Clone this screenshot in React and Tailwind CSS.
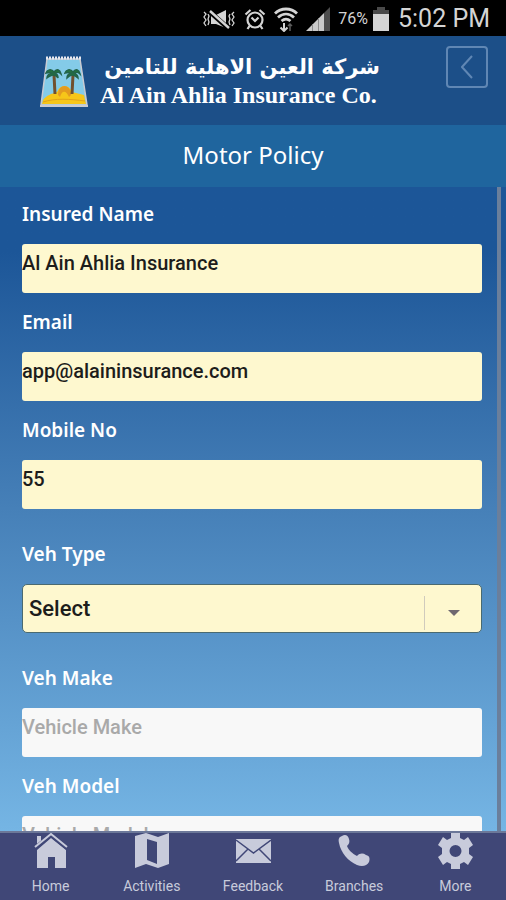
import React from 'react';

const MuteIcon = () => (
  <svg viewBox="0 0 34 22" className="h-[22px] w-[34px]" fill="none" stroke="#d4d4d4" strokeWidth="1.6">
    <path d="M2 4l2 2-2 3 2 3-2 3 2 3M6 6l1 2-1 3 1 3-1 3M32 4l-2 2 2 3-2 3 2 3-2 3M28 6l-1 2 1 3-1 3 1 3" strokeWidth="1.3" />
    <path d="M9 7h5l10-5v18l-10-4H9z" fill="#d4d4d4" stroke="none" />
    <path d="M7 3l19 17" stroke="#000" strokeWidth="5" />
    <path d="M8 3l19 17" strokeWidth="2.4" />
  </svg>
);

const AlarmIcon = () => (
  <svg viewBox="0 0 22 22" className="h-[22px] w-[22px]" fill="none" stroke="#d4d4d4" strokeWidth="2.2">
    <circle cx="11" cy="12" r="7.5" />
    <path d="M1.500 6.500l5-4.500M20.500 6.500l-5-4.500M5.500 18l-2 3M16.500 18l2 3M7.500 9.500l3.500 3.500 3.500-3.500" />
  </svg>
);

const WifiIcon = () => (
  <svg viewBox="0 0 24 25" className="h-[25px] w-6" fill="none" stroke="#d4d4d4" strokeWidth="2.8">
    <path d="M1 6.500c6-6 16-6 22 0M4 10.500c5-4.500 11-4.500 16 0M7.500 14c3-2.500 6-2.500 9 0" />
    <path d="M10 16v8M6.500 20.500l3.500 3.500 3.500-3.500" strokeWidth="2" />
    <path d="M16 24v-7M14 19l2-2 2 2" stroke="#5c5c5c" strokeWidth="1.5" />
  </svg>
);

const SignalIcon = () => (
  <svg viewBox="0 0 24 24" className="h-6 w-6">
    <path d="M0 24L18 6v18z" fill="#c9c9c9" />
    <path d="M18 6l6-6v24h-6z" fill="#4d4d4d" />
    <path d="M6.500 17v7M12.500 11v13" stroke="#8c8c8c" />
  </svg>
);

const BatteryIcon = () => (
  <svg viewBox="0 0 18 24" className="h-6 w-[18px]">
    <path d="M5 0h8v3h4v5H1V3h4z" fill="#4a4a4a" />
    <path d="M1 7h16v17H1z" fill="#d4d4d4" />
  </svg>
);

const PalmLogo = () => (
  <svg viewBox="0 0 50 52" className="h-[52px] w-[50px] shrink-0">
    <path d="M8 4h33l7 46H2z" fill="#84cbe8" stroke="#c9cbd2" strokeWidth="1.500" />
    <path d="M7 3h35" stroke="#e9e9ef" strokeWidth="3" strokeDasharray="2 1" />
    <path d="M4 45c4-5 8-6 14-8 3-8 12-8 15 0l12 3 2 9H3z" fill="#f6c619" />
    <path d="M19 40c0-12 13-12 13 0l-2 2c-3-7-7-7-9 0z" fill="#e39b20" />
    <path d="M4 47c12-4 27-3 42-1" stroke="#e0a21c" fill="none" />
    <path d="M15 20l1 19M34 20l-1 19" stroke="#71502e" strokeWidth="3" />
    <path d="M15 17c-3-4-7-2-8 1 3-1 4-1 6 0-3 1-5 3-5 5 3-2 4-3 6-3 3 0 4 1 5 3 0-2-1-4-3-5 3-1 4-1 6 1-1-4-4-6-7-2zM34 17c-3-4-7-2-8 1 3-1 4-1 6 0-3 1-4 3-4 5 2-2 3-3 5-3 3 0 4 1 6 3 0-2-2-4-4-5 3-1 4-1 6 1-1-4-4-6-7-2z" fill="#23763e" stroke="#23634a" strokeWidth="1.500" />
    <path d="M1 51h48" stroke="#c9cbd2" strokeWidth="2" />
  </svg>
);

const navItems = [
  {
    label: 'Home',
    icon: (
      <>
        <path d="M4 3h4v6l-4 4z" />
        <path d="M18 5l15 12v18H22V24h-7v11H4V17z" />
        <path d="M2 15L18 2l16 13" fill="none" stroke="#404777" strokeWidth="4" />
        <path d="M2 14L18 1l16 13" fill="none" stroke="#c8cbdb" strokeWidth="2" />
      </>
    ),
  },
  {
    label: 'Activities',
    icon: <path fillRule="evenodd" d="M1 3l11-3 12 4 11-4v31l-11 4-12-4-11 4zM13 6v21l10 4V9z" />,
  },
  {
    label: 'Feedback',
    icon: (
      <>
        <path d="M1 6h35v24H1z" />
        <path d="M1 7l17.500 13L36 7M1 28l12-12M36 28L24 16" fill="none" stroke="#404777" strokeWidth="1.500" />
      </>
    ),
  },
  {
    label: 'Branches',
    icon: <path d="M6 3c3-2 6-1 7 3 1 3 0 5-2 7 2 5 5 7 10 10 3-3 6-3 9-1 4 1 4 4 3 7-2 4-7 5-12 3C12 28 5 20 3 10 2 6 3 4 6 3z" />,
  },
  {
    label: 'More',
    icon: <path fillRule="evenodd" d="M14 0h9v5l4 2 4-3 5 8-4 3v6l4 3-5 8-4-3-4 2v5h-9v-5l-4-2-4 3-5-8 4-3v-6l-4-3 5-8 4 3 4-2zM18.500 12a6 6 0 100 12 6 6 0 000-12z" />,
  },
];

const TextField = ({ id, label, type = 'text', value, placeholder }) => (
  <div className="flex flex-col gap-[18px]">
    <label htmlFor={id} className="self-start font-['Noto_Sans',sans-serif] text-[19px] leading-6 font-semibold text-white">
      {label}
    </label>
    <input
      id={id}
      type={type}
      defaultValue={value}
      placeholder={placeholder}
      className="h-[49px] w-full rounded-[3px] bg-[#fef8cf] pb-3 text-[20px] font-medium text-[#1d1d1b] outline-none placeholder:text-[#a9a9a9] placeholder-shown:bg-[#f8f8f8]"
    />
  </div>
);

const App = () => {
  return (
    <div className="flex h-screen flex-col overflow-hidden bg-[#1c5698] font-[Roboto,sans-serif]">
      {/* Status bar */}
      <div className="flex h-9 shrink-0 items-center justify-end gap-2 bg-black pt-[2px] pr-4 text-[#d4d4d4]">
        <MuteIcon />
        <AlarmIcon />
        <WifiIcon />
        <SignalIcon />
        <div className="flex items-center gap-1">
          <span className="text-[16px]">76%</span>
          <BatteryIcon />
        </div>
        <span className="text-[25px] leading-8">5:02 PM</span>
      </div>

      {/* Brand header */}
      <header className="flex h-[89px] shrink-0 items-start justify-between bg-[#1c4f88] pr-[18px] pl-[39px]">
        <div className="flex gap-[11px] pt-[19px] text-white">
          <PalmLogo />
          <div className="flex w-[280px] flex-col whitespace-nowrap">
            <span dir="rtl" lang="ar" className="font-['DejaVu_Sans',sans-serif] text-[21px] leading-6 font-bold">
              شركة العين الاهلية للتامين
            </span>
            <span className="font-['Liberation_Serif',serif] text-[24px] leading-8 font-bold">
              Al Ain Ahlia Insurance Co.
            </span>
          </div>
        </div>
        <button
          aria-label="Back"
          className="mt-[10px] flex h-[42px] w-[42px] items-center justify-center rounded-[4px] border-2 border-[#6087b4] text-[#6087b4]"
        >
          <svg viewBox="0 0 12 24" className="h-6 w-3" fill="none" stroke="currentColor" strokeWidth="2">
            <path d="M11 1L1 12l10 11" />
          </svg>
        </button>
      </header>

      <h1 className="h-[62px] shrink-0 bg-[#1f659e] text-center font-['Noto_Sans',sans-serif] text-[24px] leading-[60px] text-white">
        Motor Policy
      </h1>

      {/* Policy form */}
      <main className="flex min-h-0 flex-1 overflow-hidden bg-linear-to-b from-[#1c5698] from-10% via-[#4680b8] via-50% to-[#75b5e4]">
        <form className="flex flex-1 flex-col gap-[17px] pt-[15px] pr-[15px] pl-[22px]">
          <TextField id="insured-name" label="Insured Name" value="Al Ain Ahlia Insurance" />
          <TextField id="email" label="Email" type="email" value="app@alaininsurance.com" />
          <TextField id="mobile" label="Mobile No" type="tel" value="55" />
          <div className="my-4 flex flex-col gap-[18px]">
            <label htmlFor="veh-type" className="self-start font-['Noto_Sans',sans-serif] text-[19px] leading-6 font-semibold text-white">
              Veh Type
            </label>
            <div className="relative">
              <select
                id="veh-type"
                className="block h-[49px] w-full appearance-none rounded-[5px] border border-[#4a6a70] bg-[#fef8cf] pl-[6px] text-[22px] font-medium text-[#1d1d1b] outline-none"
              >
                <option>Select</option>
              </select>
              <div className="pointer-events-none absolute inset-y-0 right-0 flex w-[58px] items-end pb-[3px]">
                <div className="flex h-[34px] flex-1 items-center justify-center border-l border-[#d0cbbd]">
                  <svg viewBox="0 0 12 6" className="h-[6px] w-3" fill="#6f6870">
                    <path d="M0 0h12L6 6z" />
                  </svg>
                </div>
              </div>
            </div>
          </div>
          <TextField id="veh-make" label="Veh Make" placeholder="Vehicle Make" />
          <TextField id="veh-model" label="Veh Model" placeholder="Vehicle Model" />
        </form>
        <div className="mr-[5px] w-1 shrink-0 bg-[#6b7f9b]" />
      </main>

      {/* Bottom navigation */}
      <nav className="grid h-[69px] shrink-0 grid-cols-5 border-t-2 border-[#6c7899] bg-[#404777] text-[#c8cbdb]">
        {navItems.map((item) => (
          <a key={item.label} href="#" className="flex flex-col items-center gap-[7px] text-[14px] leading-5">
            <svg viewBox="0 0 36 36" className="h-9 w-9" fill="currentColor">
              {item.icon}
            </svg>
            {item.label}
          </a>
        ))}
      </nav>
    </div>
  );
};

export default App;
